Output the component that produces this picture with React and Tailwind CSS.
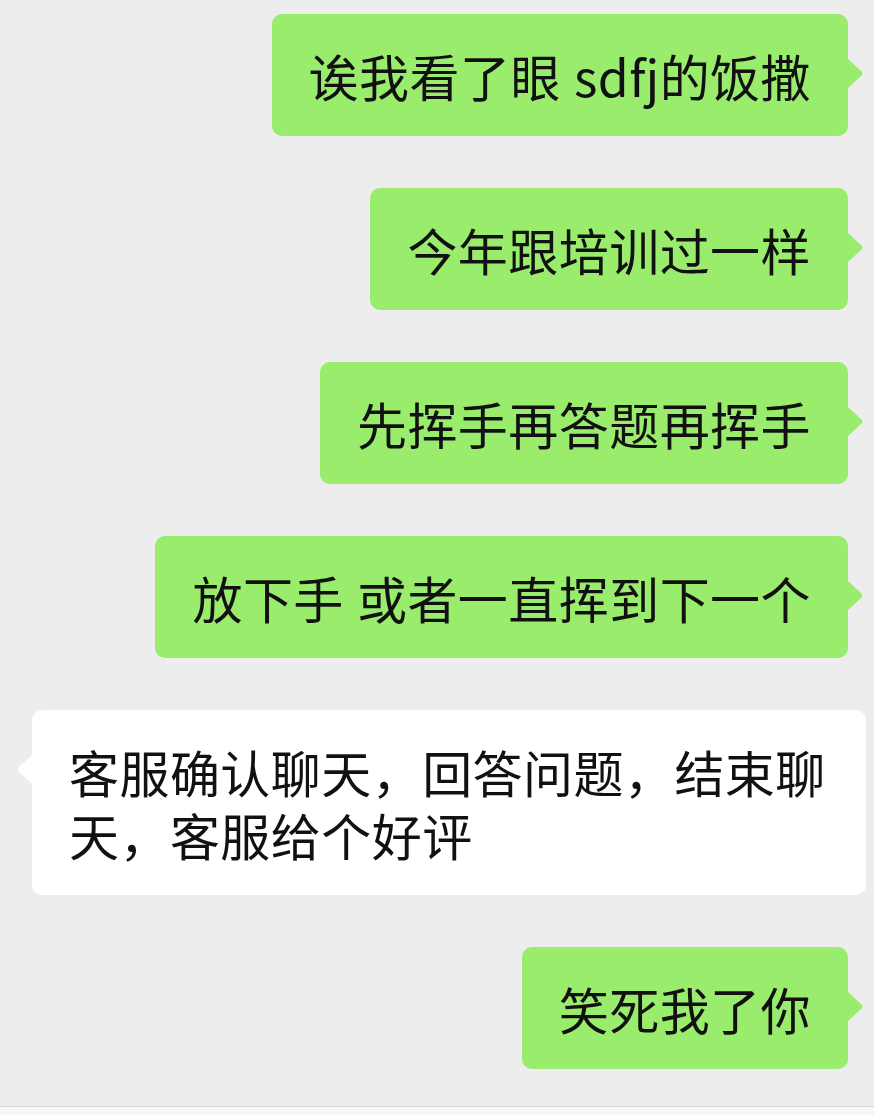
import React from 'react';

const messages = [
  { from: 'me', text: '诶我看了眼 sdfj的饭撒' },
  { from: 'me', text: '今年跟培训过一样' },
  { from: 'me', text: '先挥手再答题再挥手' },
  { from: 'me', text: '放下手 或者一直挥到下一个' },
  { from: 'them', text: '客服确认聊天，回答问题，结束聊天，客服给个好评' },
  { from: 'me', text: '笑死我了你' },
];

// little pointer on the side of a bubble
const Tail = ({ side, color }) => (
  <svg
    width="17"
    height="31"
    viewBox="0 0 17 31"
    className={`absolute top-[44px] ${side === 'right' ? 'left-[calc(100%-1px)]' : 'right-[calc(100%-1px)] -scale-x-100'}`}
  >
    <path d="M0 0 L14.5 13.5 Q16.5 15.5 14.5 17.5 L0 31 Z" fill={color} />
  </svg>
);

const Bubble = ({ from, text }) => {
  if (from === 'me') {
    return (
      <div className="flex justify-end pr-[26px]">
        <div className="relative rounded-[10px] bg-[#9aec6c] px-[37px] py-[29px] text-[50px] leading-[64px] tracking-[0.45px] [word-spacing:1.5px] whitespace-nowrap text-[#111111]">
          {text}
          <Tail side="right" color="#9aec6c" />
        </div>
      </div>
    );
  }
  return (
    <div className="flex pl-[32px]">
      <div className="relative w-[834px] rounded-[10px] bg-white pl-[37px] pr-[30px] py-[30px] text-[50px] leading-[62.5px] tracking-[0.45px] text-[#111111] break-all">
        {text}
        <Tail side="left" color="#ffffff" />
      </div>
    </div>
  );
};

export default function App() {
  return (
    <div
      className="flex h-[1115px] w-[874px] flex-col overflow-hidden bg-[#ededed]"
      style={{ fontFamily: '"Noto Sans CJK SC", "Noto Sans", sans-serif' }}
    >
      <div className="flex flex-1 flex-col gap-[52px] pt-[14px]">
        {messages.map((m, i) => (
          <Bubble key={i} from={m.from} text={m.text} />
        ))}
      </div>
      <div className="h-[9px] border-t border-[#d8d8d8] bg-[#f7f7f7]" />
    </div>
  );
}
